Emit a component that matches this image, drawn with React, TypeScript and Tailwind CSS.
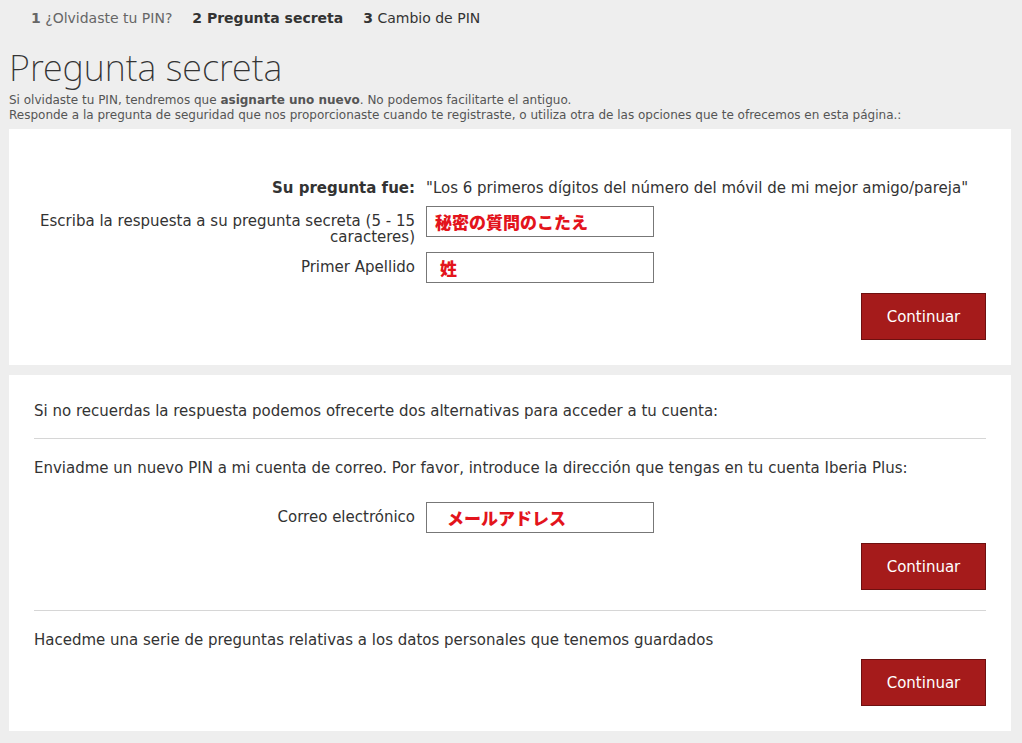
import React from 'react';

const font = { fontFamily: '"DejaVu Sans", Verdana, sans-serif' };

const Continuar: React.FC = () => (
  <div className="flex justify-end">
    <button className="w-[125px] h-[47px] bg-[#a51b1b] border border-[#6e1010] text-white text-[15px]">
      Continuar
    </button>
  </div>
);

const Field: React.FC<{ label: React.ReactNode; value: string; indent?: string }> = ({ label, value, indent = 'pl-[8px]' }) => (
  <div className="flex items-start h-[31px]">
    <div className="w-[406px] text-right text-[15px] leading-[16px] text-[#333] pt-[7px]">{label}</div>
    <div className={`ml-[11px] w-[228px] h-[31px] border border-[#777] flex items-center ${indent}`}>
      <span className="text-[17px] font-black text-[#e3141c]" style={{ fontFamily: '"Noto Sans CJK JP", sans-serif' }}>
        {value}
      </span>
    </div>
  </div>
);

export default function App() {
  return (
    <div className="min-h-[743px] bg-[#eeeeee] text-[#333] pb-[12px]" style={font}>
      <nav className="flex gap-[20px] pl-[31px] pt-[9px] text-[14px] leading-[18px]">
        <span className="text-[#666]"><b className="text-[#666]">1</b> ¿Olvidaste tu PIN?</span>
        <span className="font-bold text-[#333]">2 Pregunta secreta</span>
        <span className="text-[#333]"><b>3</b> Cambio de PIN</span>
      </nav>

      <div className="pl-[9px] pr-[11px]">
        <h1 className="mt-[22px] text-[36px] leading-[38px] font-extralight text-[#333]" style={{ fontFamily: '"Noto Sans", sans-serif' }}>
          Pregunta secreta
        </h1>
        <p className="mt-[6px] text-[12px] leading-[15px] text-[#555]">
          Si olvidaste tu PIN, tendremos que <b>asignarte uno nuevo</b>. No podemos facilitarte el antiguo.
          <br />
          Responde a la pregunta de seguridad que nos proporcionaste cuando te registraste, o utiliza otra de las opciones que te ofrecemos en esta página.:
        </p>

        <section className="mt-[6px] bg-white px-[25px] pt-[50px] pb-[25px] text-[15px] leading-[18px]">
          <div className="flex items-baseline">
            <div className="w-[381px] text-right font-bold">Su pregunta fue:</div>
            <div className="ml-[11px]">"Los 6 primeros dígitos del número del móvil de mi mejor amigo/pareja"</div>
          </div>
          <div className="mt-[9px] flex flex-col gap-[15px] -ml-[25px]">
            <Field label={<>Escriba la respuesta a su pregunta secreta (5 - 15<br />caracteres)</>} value="秘密の質問のこたえ" />
            <Field label="Primer Apellido" value="姓" indent="pl-[13px]" />
          </div>
          <div className="mt-[10px]">
            <Continuar />
          </div>
        </section>

        <section className="mt-[10px] bg-white px-[25px] pt-[27px] pb-[25px] text-[15px] leading-[18px]">
          <p>Si no recuerdas la respuesta podemos ofrecerte dos alternativas para acceder a tu cuenta:</p>
          <hr className="mt-[18px] border-t border-[#d6d6d6]" />
          <p className="mt-[20px]">Enviadme un nuevo PIN a mi cuenta de correo. Por favor, introduce la dirección que tengas en tu cuenta Iberia Plus:</p>
          <div className="mt-[25px] -ml-[25px]">
            <Field label="Correo electrónico" value="メールアドレス" indent="pl-[20px]" />
          </div>
          <div className="mt-[10px]">
            <Continuar />
          </div>
          <hr className="mt-[20px] border-t border-[#d6d6d6]" />
          <p className="mt-[20px]">Hacedme una serie de preguntas relativas a los datos personales que tenemos guardados</p>
          <div className="mt-[10px]">
            <Continuar />
          </div>
        </section>
      </div>
    </div>
  );
}
